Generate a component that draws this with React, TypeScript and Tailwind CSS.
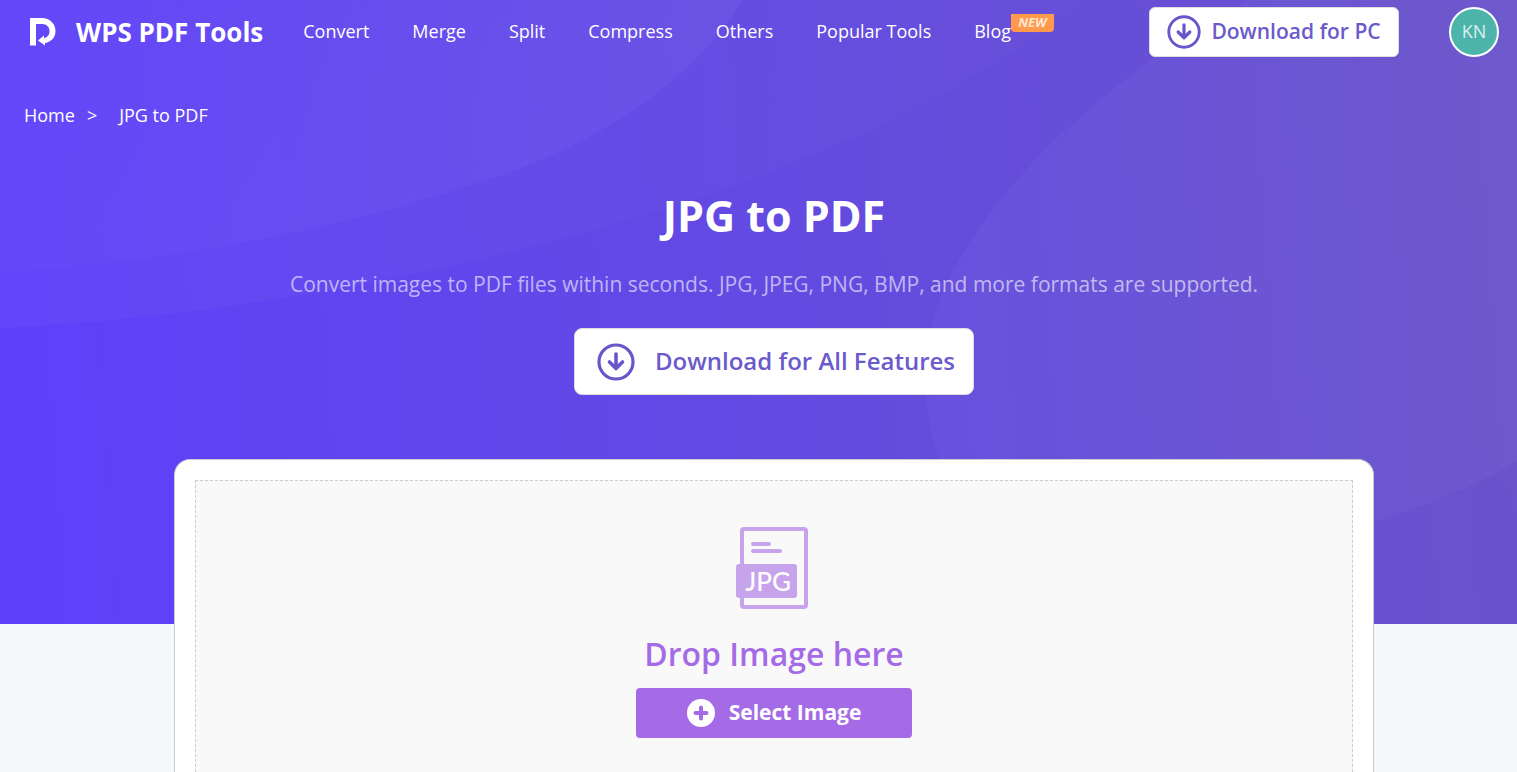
const navLinks = ['Convert', 'Merge', 'Split', 'Compress', 'Others', 'Popular Tools'];

function HeroBackground() {
  return (
    <svg
      className="absolute inset-x-0 top-0 -z-10 h-[624px] w-full"
      viewBox="0 0 1517 624"
      preserveAspectRatio="none"
      aria-hidden="true"
    >
      <defs>
        <linearGradient id="base" gradientUnits="userSpaceOnUse" x1="0" y1="400" x2="1517" y2="300">
          <stop offset="0" stopColor="#5e40fb" />
          <stop offset="0.5" stopColor="#634ae2" />
          <stop offset="1" stopColor="#6953cb" />
        </linearGradient>
        <linearGradient id="wave" gradientUnits="userSpaceOnUse" x1="150" y1="0" x2="640" y2="300">
          <stop offset="0" stopColor="#fff" stopOpacity="0.01" />
          <stop offset="1" stopColor="#fff" stopOpacity="0.04" />
        </linearGradient>
        <linearGradient id="waveOuter" gradientUnits="userSpaceOnUse" x1="0" y1="300" x2="1080" y2="0">
          <stop offset="0" stopColor="#fff" stopOpacity="0.03" />
          <stop offset="1" stopColor="#fff" stopOpacity="0.01" />
        </linearGradient>
      </defs>
      <rect width="1517" height="624" fill="url(#base)" />
      <path d="M0 0H1082C960 105 780 175 600 228C420 280 200 318 0 328Z" fill="url(#waveOuter)" />
      <path d="M0 0H742C690 85 590 150 470 185C320 235 160 262 0 272Z" fill="url(#wave)" />
      <path
        d="M1517 0H1248C1090 85 895 260 928 410C940 570 1150 590 1374 522C1430 504 1480 484 1517 462Z"
        fill="#fff"
        fillOpacity="0.03"
      />
    </svg>
  );
}

function LogoIcon() {
  return (
    <svg width="26" height="28" viewBox="0 0 26 28" fill="#fff" aria-hidden="true">
      <path d="M0 0H12C20 0 25.500 6 25.500 13C25.500 19 21.500 24 15 25V27.500L8 22.500L14 17.500V20C17.500 19.500 19.500 17 19.500 13C19.500 9 16.500 6 12.500 6H6V27.500H0Z" />
    </svg>
  );
}

function DownloadIcon({ size }: { size: number }) {
  return (
    <svg
      width={size}
      height={size}
      viewBox="0 0 38 38"
      fill="none"
      stroke="#6a55cb"
      strokeLinecap="round"
      strokeLinejoin="round"
      aria-hidden="true"
    >
      <circle cx="19" cy="19" r="17" strokeWidth="3.200" />
      <path d="M19 11V25M12.500 19L19 25.500L25.500 19" strokeWidth="3.600" />
    </svg>
  );
}

function JpgFileIcon() {
  return (
    <svg width="76" height="84" viewBox="0 0 76 84" aria-hidden="true">
      <rect x="6" y="3" width="64" height="78" rx="2" fill="none" stroke="#c7a3ec" strokeWidth="4" />
      <path d="M17 18H33M17 25H44" stroke="#c7a3ec" strokeWidth="4" strokeLinecap="round" />
      <rect x="0" y="38" width="61" height="34" rx="3" fill="#c7a3ec" />
      <text
        x="32"
        y="65"
        textAnchor="middle"
        fill="#fff"
        fontSize="26"
        className="font-['Lato','Open_Sans',sans-serif] font-medium"
      >
        JPG
      </text>
    </svg>
  );
}

function PlusIcon() {
  return (
    <svg width="28" height="28" viewBox="0 0 28 28" aria-hidden="true">
      <circle cx="14" cy="14" r="14" fill="#fff" />
      <path d="M14 8.500V19.500M8.500 14H19.500" stroke="#a56be6" strokeWidth="4" strokeLinecap="round" />
    </svg>
  );
}

function Header() {
  return (
    <header className="flex h-16 items-center pl-[30px] pr-[18px] text-white">
      <a href="#" className="flex items-center gap-5 whitespace-nowrap text-[26px] font-bold">
        <LogoIcon />
        WPS PDF Tools
      </a>
      <nav className="ml-10 flex items-center gap-[43px] whitespace-nowrap pb-0.5 text-[18px]">
        {navLinks.map((link) => (
          <a key={link} href="#">
            {link}
          </a>
        ))}
        <a href="#" className="relative">
          Blog
          <span className="absolute left-full -top-1 flex h-[18px] w-[43px] items-center justify-center rounded-br rounded-bl bg-[#ff9a4d] text-[13px] font-bold italic text-[#ffe6d3]">
            NEW
          </span>
        </a>
      </nav>
      <button
        type="button"
        className="ml-auto flex h-[50px] w-[250px] items-center justify-center gap-2.5 whitespace-nowrap rounded-md border border-[#ddd] bg-white text-[21px] font-semibold text-[#6a5acb]"
      >
        <DownloadIcon size={34} />
        Download for PC
      </button>
      <button
        type="button"
        aria-label="Account"
        className="ml-[50px] h-[50px] w-[50px] shrink-0 rounded-full border-2 border-white bg-[#4cb4ab] pb-0.5 text-[18px] text-white/80"
      >
        KN
      </button>
    </header>
  );
}

export default function App() {
  return (
    <div className="relative isolate flex min-h-screen flex-col bg-[#f6f7fb] font-['Open_Sans','Noto_Sans',sans-serif]">
      <HeroBackground />
      <Header />

      <nav aria-label="Breadcrumb" className="mt-9 flex h-8 items-center pb-0.5 pl-6 text-[18px] text-white">
        <a href="#">Home</a>
        <span className="ml-3 mr-[22px]">&gt;</span>
        <a href="#">JPG to PDF</a>
      </nav>

      <main className="flex flex-1 flex-col items-center pl-[31px]">
        <h1 className="mt-14 text-[43px] font-bold leading-[56px] text-white">JPG to PDF</h1>
        <p className="mt-6 text-[21px] leading-8 text-white/60">
          Convert images to PDF files within seconds. JPG, JPEG, PNG, BMP, and more formats are supported.
        </p>
        <button
          type="button"
          className="mt-7 flex h-[67px] w-[400px] items-center justify-center gap-5 rounded-lg border border-[#ddd] bg-white pl-1 text-[24px] font-semibold text-[#6a5acb]"
        >
          <DownloadIcon size={38} />
          <span className="pb-0.5">Download for All Features</span>
        </button>

        <section className="mt-16 flex w-full max-w-[1200px] flex-1 flex-col rounded-t-2xl border border-b-0 border-[#ccc] bg-white px-5 pt-5">
          <div className="flex flex-1 flex-col items-center border border-b-0 border-dashed border-[#ccc] bg-[#f9f9f9] pb-6 pt-[45px]">
            <JpgFileIcon />
            <h2 className="mt-6 text-[32px] font-semibold leading-[40px] text-[#a56be6]">Drop Image here</h2>
            <button
              type="button"
              className="mt-3.5 flex h-[50px] w-[276px] items-center justify-center gap-3.5 rounded bg-[#a56be6] text-[21px] font-bold text-white"
            >
              <PlusIcon />
              Select Image
            </button>
          </div>
        </section>
      </main>
    </div>
  );
}
